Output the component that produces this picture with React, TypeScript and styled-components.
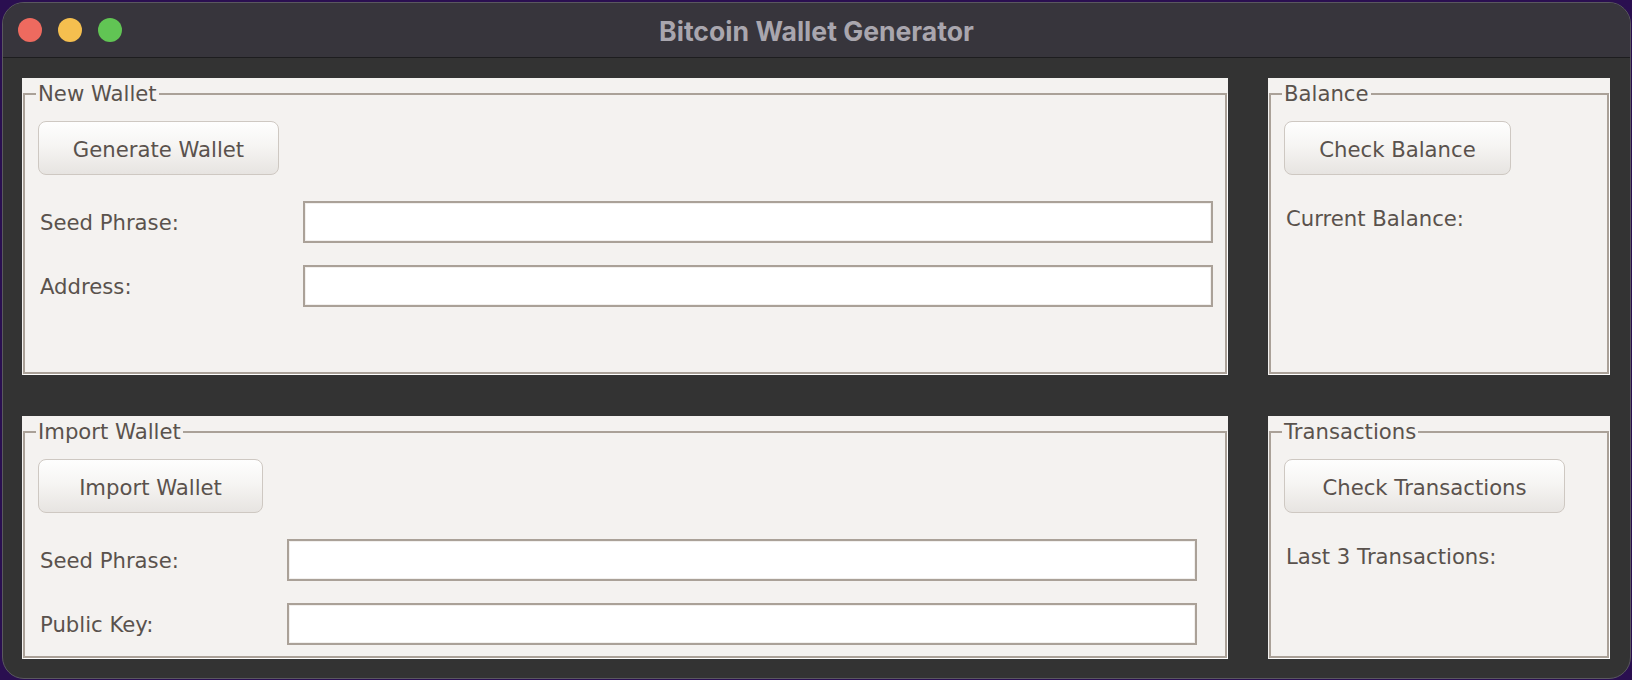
import React from "react";
import styled, { createGlobalStyle } from "styled-components";

const GlobalStyle = createGlobalStyle`
  html, body {
    margin: 0;
    padding: 0;
    background: #2a0f50;
  }
  #root {
    width: 1632px;
    height: 680px;
  }
`;

const Desktop = styled.div`
  width: 1632px;
  height: 680px;
  box-sizing: border-box;
  padding: 2px 1px 1px 2px;
  background: #2a0f50;
`;

const Window = styled.div`
  height: 100%;
  box-sizing: border-box;
  display: flex;
  flex-direction: column;
  border: 1px solid #5a585f;
  border-radius: 22px;
  overflow: hidden;
  background: #333333;
`;

const TitleBar = styled.div`
  height: 54px;
  flex: 0 0 auto;
  display: grid;
  grid-template-columns: 1fr auto 1fr;
  align-items: center;
  background: #37353c;
  border-bottom: 1px solid #1d1d1f;
`;

const Lights = styled.div`
  display: flex;
  gap: 16px;
  padding-left: 15px;
`;

const Light = styled.span<{ $color: string }>`
  width: 24px;
  height: 24px;
  border-radius: 50%;
  background: ${(p) => p.$color};
`;

const Title = styled.div`
  font-family: Inter, "Liberation Sans", sans-serif;
  font-weight: 700;
  font-size: 26.6px;
  color: #a9a6ae;
  padding-top: 1px;
`;

const Content = styled.div`
  flex: 1;
  padding: 20px 0 0 19px;
  display: grid;
  grid-template-columns: 1206px 342px;
  grid-template-rows: 297px 243px;
  column-gap: 40px;
  row-gap: 41px;
`;

const Panel = styled.div`
  background: #f4f2f0;
  padding: 5px 1px 1px 1px;
  box-sizing: border-box;
  font-family: "DejaVu Sans", "Noto Sans", sans-serif;
  font-size: 21.2px;
  color: #5a524d;
`;

const Frame = styled.fieldset`
  margin: 0;
  padding: 0;
  min-width: 0;
  height: 100%;
  box-sizing: border-box;
  border: 2px solid #aaa198;
  box-shadow: 1px 1px 0 #ffffff;
`;

const Legend = styled.legend`
  margin-left: 11px;
  padding: 0 2px;
  line-height: 22px;
`;

const Body = styled.div`
  padding: 16px 0 0 13px;
`;

const Button = styled.button<{ $width: number }>`
  width: ${(p) => p.$width}px;
  height: 54px;
  padding: 3px 0 0;
  border: 1px solid #cec8c2;
  border-radius: 8px;
  background: linear-gradient(#fefefe 0%, #f6f5f3 45%, #e7e4e1 100%);
  font-family: inherit;
  font-size: inherit;
  color: inherit;
  cursor: pointer;
`;

const Form = styled.div<{ $labelWidth: number }>`
  margin-top: 26px;
  display: grid;
  grid-template-columns: ${(p) => p.$labelWidth}px 910px;
  grid-auto-rows: 42px;
  row-gap: 22px;
  align-items: center;
`;

const Label = styled.label`
  padding: 2px 0 0 2px;
  line-height: 24px;
`;

const Field = styled.input`
  height: 42px;
  box-sizing: border-box;
  margin: 0;
  border: 2px solid #aaa198;
  box-shadow: inset 0 0 0 1px #f2f0ee;
  background: #ffffff;
  font-family: inherit;
  font-size: inherit;
  color: inherit;
  padding: 0 6px;
  outline: none;
`;

const Info = styled.div`
  margin-top: 32px;
  padding-left: 2px;
  line-height: 24px;
`;

type Row = { label: string };

const WalletPanel = ({
  title,
  action,
  buttonWidth,
  labelWidth,
  rows,
}: {
  title: string;
  action: string;
  buttonWidth: number;
  labelWidth: number;
  rows: Row[];
}) => (
  <Panel>
    <Frame>
      <Legend>{title}</Legend>
      <Body>
        <Button $width={buttonWidth}>{action}</Button>
        <Form $labelWidth={labelWidth}>
          {rows.map((r) => (
            <React.Fragment key={r.label}>
              <Label>{r.label}</Label>
              <Field type="text" />
            </React.Fragment>
          ))}
        </Form>
      </Body>
    </Frame>
  </Panel>
);

const InfoPanel = ({
  title,
  action,
  buttonWidth,
  info,
}: {
  title: string;
  action: string;
  buttonWidth: number;
  info: string;
}) => (
  <Panel>
    <Frame>
      <Legend>{title}</Legend>
      <Body>
        <Button $width={buttonWidth}>{action}</Button>
        <Info>{info}</Info>
      </Body>
    </Frame>
  </Panel>
);

const App = () => {
  return (
    <Desktop>
      <GlobalStyle />
      <Window>
        <TitleBar>
          <Lights>
            <Light $color="#ee6a5f" />
            <Light $color="#f5bf4f" />
            <Light $color="#61c554" />
          </Lights>
          <Title>Bitcoin Wallet Generator</Title>
          <div />
        </TitleBar>
        <Content>
          <WalletPanel
            title="New Wallet"
            action="Generate Wallet"
            buttonWidth={241}
            labelWidth={265}
            rows={[{ label: "Seed Phrase:" }, { label: "Address:" }]}
          />
          <InfoPanel
            title="Balance"
            action="Check Balance"
            buttonWidth={227}
            info="Current Balance:"
          />
          <WalletPanel
            title="Import Wallet"
            action="Import Wallet"
            buttonWidth={225}
            labelWidth={249}
            rows={[{ label: "Seed Phrase:" }, { label: "Public Key:" }]}
          />
          <InfoPanel
            title="Transactions"
            action="Check Transactions"
            buttonWidth={281}
            info="Last 3 Transactions:"
          />
        </Content>
      </Window>
    </Desktop>
  );
};

export default App;
